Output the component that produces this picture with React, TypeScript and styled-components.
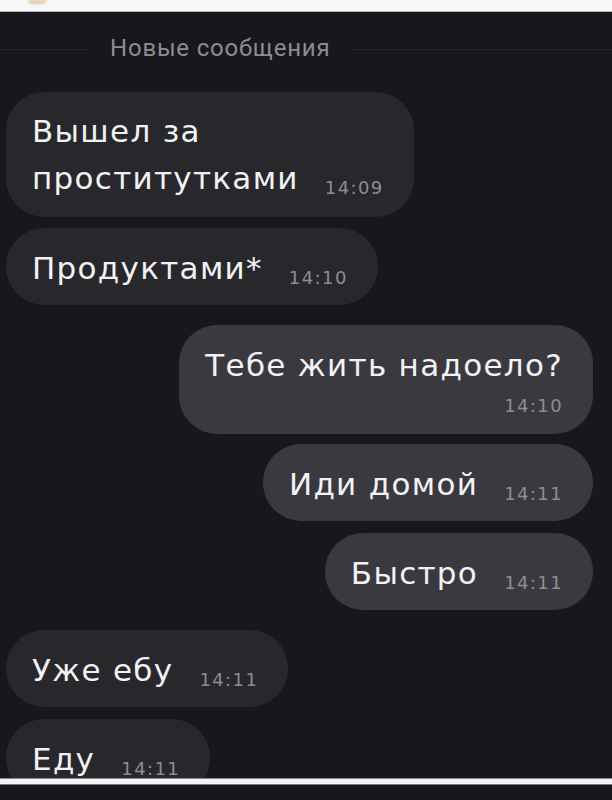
import React from "react";
import styled, { createGlobalStyle } from "styled-components";

const GlobalStyle = createGlobalStyle`
  html, body {
    margin: 0;
    padding: 0;
    background: #18171c;
  }
  body {
    font-family: "DejaVu Sans", Roboto, "Liberation Sans", sans-serif;
    -webkit-font-smoothing: antialiased;
  }
`;

const Screen = styled.div`
  width: 612px;
  height: 800px;
  display: flex;
  flex-direction: column;
  background: #18171c;
  overflow: hidden;
`;

const TopStrip = styled.div`
  height: 12px;
  flex: none;
  background: #f7f7f8;
  border-bottom: 1px solid #b9b9bd;
  box-sizing: border-box;
  padding-left: 28px;
`;

const Blob = styled.div`
  width: 18px;
  height: 4px;
  border-radius: 0 0 9px 9px;
  background: #e9c9a4;
  filter: blur(1px);
`;

const Chat = styled.div`
  height: 766px;
  flex: none;
  overflow: hidden;
  display: flex;
  flex-direction: column;
  padding: 22px 19px 0 6px;
  box-sizing: border-box;
`;

const Divider = styled.div`
  display: flex;
  align-items: center;
  gap: 22px;
  margin: 0 -19px 30px -6px;
  height: 30px;
`;

const Line = styled.div<{ $grow?: boolean }>`
  height: 1px;
  background: #26262c;
  width: ${(p) => (p.$grow ? "auto" : "88px")};
  flex: ${(p) => (p.$grow ? 1 : "none")};
  margin-top: 2px;
`;

const DividerText = styled.span`
  font-family: Roboto, "Noto Sans", sans-serif;
  color: #8c8c95;
  font-size: 24px;
  letter-spacing: 0.8px;
`;

const Bubble = styled.div<{ $out?: boolean; $loose?: boolean; $gap: number }>`
  align-self: ${(p) => (p.$out ? "flex-end" : "flex-start")};
  background: ${(p) => (p.$out ? "#3a393f" : "#28272c")};
  color: #f2f2f4;
  border-radius: 38px;
  padding: ${(p) => (p.$loose ? "16px 30px 15px 26px" : "19px 30px 16px 26px")};
  margin-top: ${(p) => p.$gap}px;
  font-size: 31px;
  letter-spacing: 1.3px;
  line-height: ${(p) => (p.$loose ? "47px" : "42px")};
  white-space: nowrap;
  flex: none;
`;

const Time = styled.span`
  display: inline-block;
  margin-left: 26px;
  font-size: 18px;
  letter-spacing: 1.4px;
  color: #8e8d94;
  vertical-align: -5px;
  line-height: 1;
`;

const TimeBelow = styled.div`
  text-align: right;
  font-size: 18px;
  letter-spacing: 1.4px;
  line-height: 24px;
  color: #8e8d94;
  margin-top: 8px;
`;

const BottomBar = styled.div`
  height: 5px;
  flex: none;
  background: #f4f4f6;
  border-top: 1px solid #8a8a8f;
  border-bottom: 1px solid #77777c;
`;

type Msg = {
  text: React.ReactNode;
  time: string;
  out?: boolean;
  gap: number;
  loose?: boolean;
  below?: boolean;
};

const messages: Msg[] = [
  {
    text: (
      <>
        Вышел за
        <br />
        проститутками
      </>
    ),
    time: "14:09",
    gap: 0,
    loose: true,
  },
  { text: "Продуктами*", time: "14:10", gap: 11 },
  { text: "Тебе жить надоело?", time: "14:10", out: true, gap: 20, below: true },
  { text: "Иди домой", time: "14:11", out: true, gap: 10 },
  { text: "Быстро", time: "14:11", out: true, gap: 12 },
  { text: "Уже ебу", time: "14:11", gap: 20 },
  { text: "Еду", time: "14:11", gap: 12 },
];

export default function App() {
  return (
    <Screen>
      <GlobalStyle />
      <TopStrip>
        <Blob />
      </TopStrip>
      <Chat>
        <Divider>
          <Line />
          <DividerText>Новые сообщения</DividerText>
          <Line $grow />
        </Divider>
        {messages.map((m, i) => (
          <Bubble key={i} $out={m.out} $loose={m.loose} $gap={m.gap}>
            {m.text}
            {m.below ? <TimeBelow>{m.time}</TimeBelow> : <Time>{m.time}</Time>}
          </Bubble>
        ))}
      </Chat>
      <BottomBar />
    </Screen>
  );
}
